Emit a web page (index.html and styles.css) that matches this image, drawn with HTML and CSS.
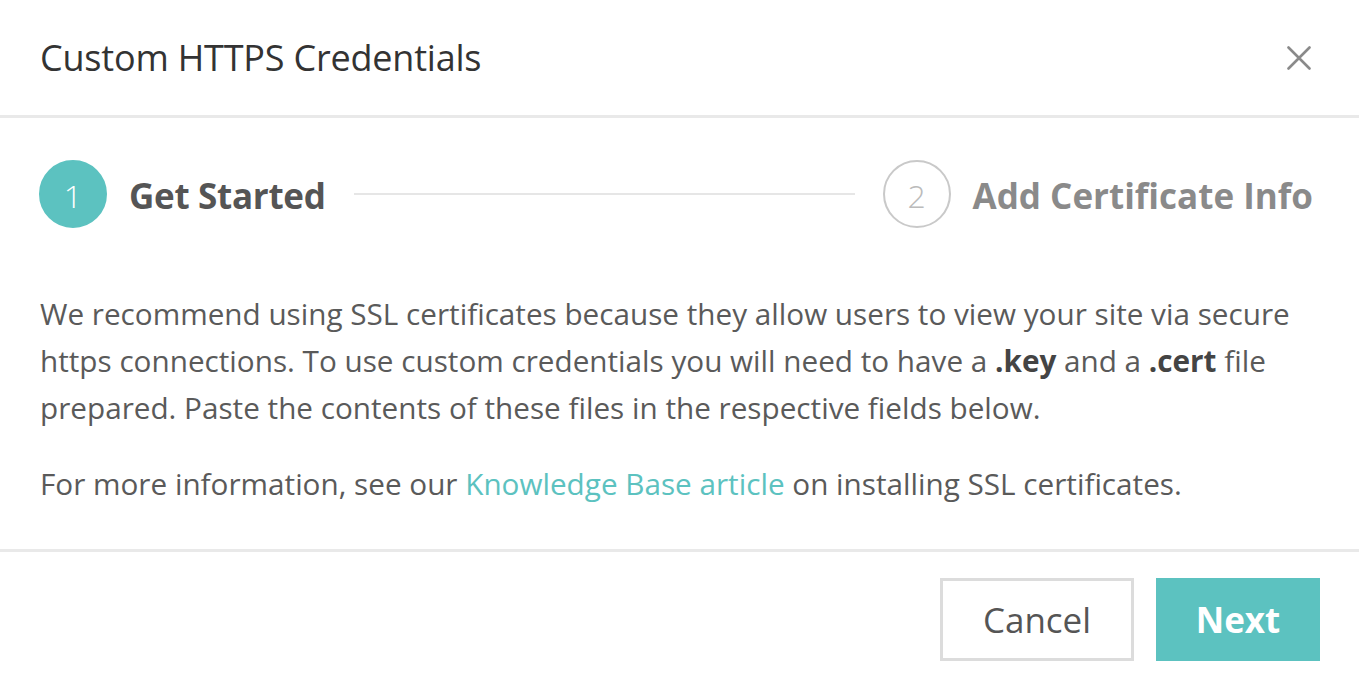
FILE: index.html
```html
<!DOCTYPE html>
<html>
<head>
<meta charset="utf-8">
<link rel="stylesheet" href="styles.css">
</head>
<body>
<div class="modal">
  <div class="header">
    <h1 class="title">Custom HTTPS Credentials</h1>
    <button class="close" aria-label="Close">
      <svg width="24" height="24" viewBox="0 0 24 24"><path d="M1.5 1.5 L22.5 22.5 M22.5 1.5 L1.5 22.5" stroke="#8a8a8a" stroke-width="2.6" stroke-linecap="round" fill="none"/></svg>
    </button>
  </div>
  <div class="body">
    <div class="steps">
      <div class="step active"><span class="num">1</span><span class="label">Get Started</span></div>
      <div class="connector"></div>
      <div class="step"><span class="num">2</span><span class="label">Add Certificate Info</span></div>
    </div>
    <p class="text">We recommend using SSL certificates because they allow users to view your site via secure https connections. To use custom credentials you will need to have a <b>.key</b> and a <b>.cert</b> file prepared. Paste the contents of these files in the respective fields below.</p>
    <p class="text second">For more information, see our <a href="#" class="link">Knowledge Base article</a> on installing SSL certificates.</p>
  </div>
  <div class="footer">
    <button class="btn cancel">Cancel</button>
    <button class="btn next">Next</button>
  </div>
</div>
</body>
</html>
```
FILE: styles.css
```css
* { box-sizing: border-box; }
html, body { margin: 0; padding: 0; background: #fff; }
body { font-family: "Open Sans", "Noto Sans", sans-serif; color: #555; }
.modal { width: 1359px; }
.header {
  height: 118px;
  padding: 0 40px;
  display: flex;
  align-items: center;
  justify-content: space-between;
  border-bottom: 3px solid #e9e9e9;
}
.title { margin: 0; font-size: 36px; font-weight: 400; color: #333; letter-spacing: -0.2px; }
.close { background: none; border: 0; padding: 0; margin-right: 8px; display: flex; cursor: pointer; }
.body { padding: 42px 46px 0 39px; }
.steps { display: flex; align-items: center; }
.step { display: flex; align-items: center; }
.num {
  width: 68px; height: 68px; border-radius: 50%;
  display: flex; align-items: center; justify-content: center;
  font-size: 32px; font-weight: 300; padding-top: 2px;
  border: 2px solid #c9c9c9; color: #bbb;
}
.step.active .num { background: #5cc2c0; border-color: #5cc2c0; color: #fff; }
.label { margin-left: 22px; padding-top: 3px; font-size: 35px; font-weight: 700; color: #8a8a8a; letter-spacing: -0.3px; }
.step:not(.active) .label { letter-spacing: 0; }
.step.active .label { color: #555; }
.connector { flex: 1; height: 2px; background: #e6e6e6; margin: 0 28px; }
.text { margin: 62px 0 0 1px; font-size: 29.7px; line-height: 47px; font-weight: 400; color: #5a5a5a; }
.text b { font-weight: 700; color: #444; }
.text.second { margin-top: 29px; margin-bottom: 0; }
.link { color: #5cc2c0; text-decoration: none; }
.footer {
  margin-top: 42px;
  border-top: 3px solid #e9e9e9;
  padding: 26px 39px 0 0;
  display: flex;
  justify-content: flex-end;
  gap: 22px;
}
.btn {
  height: 83px;
  font-family: "Open Sans", "Noto Sans", sans-serif;
  font-size: 35px;
  cursor: pointer;
}
.cancel { width: 194px; background: #fff; border: 3px solid #dcdcdc; color: #555; font-weight: 400; }
.next { width: 164px; background: #5cc2c0; border: 0; color: #fff; font-weight: 700; }
```
